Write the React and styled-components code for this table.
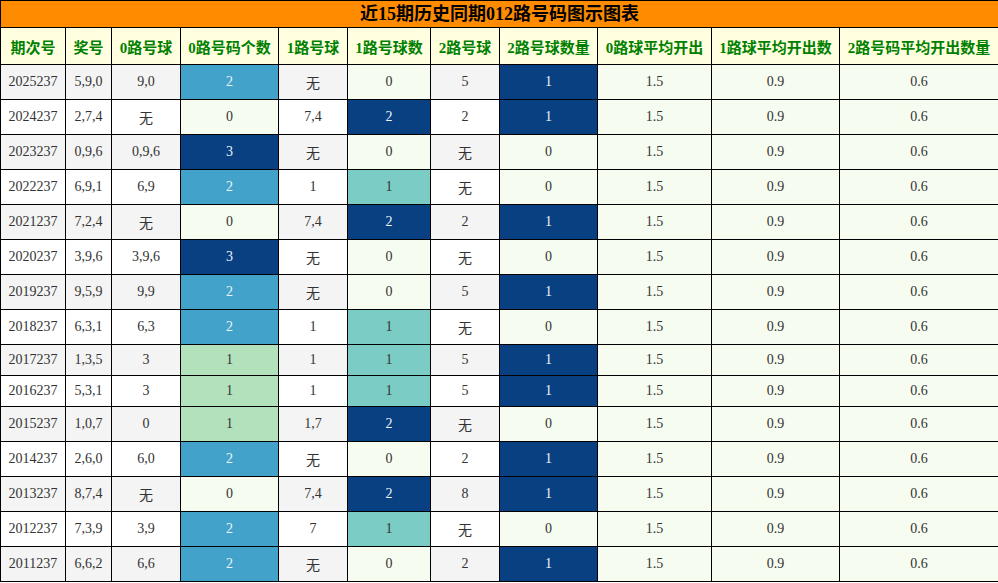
import React from "react";
import styled, { createGlobalStyle } from "styled-components";

const GlobalStyle = createGlobalStyle`
  html, body { margin: 0; padding: 0; background: #fff; }
  body { font-family: "Liberation Serif", "Noto Sans CJK SC", serif; }
`;

const Table = styled.table`
  width: 998px;
  table-layout: fixed;
  border-collapse: collapse;
  font-family: "Liberation Serif", "Noto Sans CJK SC", serif;
`;

const TitleCell = styled.th`
  height: 26px;
  padding: 0;
  background: #ff8c00;
  border: 1px solid #000;
  color: #000;
  font-size: 18px;
  font-weight: bold;
  text-align: center;
  vertical-align: middle;
  line-height: 24px;
`;

const HeadCell = styled.th`
  padding: 8px 0 7px;
  background: #ffffe0;
  border: 1px solid #000;
  color: #008000;
  font-size: 15px;
  font-weight: bold;
  text-align: center;
  white-space: nowrap;
`;

const Cell = styled.td`
  padding: 7px 0;
  border: 1px solid #000;
  font-size: 14px;
  text-align: center;
  vertical-align: middle;
  white-space: nowrap;
  color: ${(p) => (p.$light ? "#eef3f8" : "#333")};
  background: ${(p) => p.$bg || (p.$odd ? "#f4f4f4" : "#fff")};
`;

const PALE = "#f7fcf0";
const scales = {
  c0: { 0: PALE, 1: "#b3e1bb", 2: "#43a2ca", 3: "#084081" },
  c1: { 0: PALE, 1: "#7bccc4", 2: "#084081" },
  c2: { 0: PALE, 1: "#084081" },
};
const darkBgs = ["#43a2ca", "#084081"];

const widths = [65, 46, 69, 98, 69, 83, 69, 98, 114, 128, 159];
const headers = [
  "期次号",
  "奖号",
  "0路号球",
  "0路号码个数",
  "1路号球",
  "1路号球数",
  "2路号球",
  "2路号球数量",
  "0路球平均开出",
  "1路球平均开出数",
  "2路号码平均开出数量",
];

const rows = [
  ["2025237", "5,9,0", "9,0", 2, "无", 0, "5", 1],
  ["2024237", "2,7,4", "无", 0, "7,4", 2, "2", 1],
  ["2023237", "0,9,6", "0,9,6", 3, "无", 0, "无", 0],
  ["2022237", "6,9,1", "6,9", 2, "1", 1, "无", 0],
  ["2021237", "7,2,4", "无", 0, "7,4", 2, "2", 1],
  ["2020237", "3,9,6", "3,9,6", 3, "无", 0, "无", 0],
  ["2019237", "9,5,9", "9,9", 2, "无", 0, "5", 1],
  ["2018237", "6,3,1", "6,3", 2, "1", 1, "无", 0],
  ["2017237", "1,3,5", "3", 1, "1", 1, "5", 1],
  ["2016237", "5,3,1", "3", 1, "1", 1, "5", 1],
  ["2015237", "1,0,7", "0", 1, "1,7", 2, "无", 0],
  ["2014237", "2,6,0", "6,0", 2, "无", 0, "2", 1],
  ["2013237", "8,7,4", "无", 0, "7,4", 2, "8", 1],
  ["2012237", "7,3,9", "3,9", 2, "7", 1, "无", 0],
  ["2011237", "6,6,2", "6,6", 2, "无", 0, "2", 1],
];

function ScaleCell({ value, scale, odd }) {
  const bg = scale[value];
  return (
    <Cell $odd={odd} $bg={bg} $light={darkBgs.includes(bg)}>
      {value}
    </Cell>
  );
}

export default function App() {
  return (
    <>
      <GlobalStyle />
      <Table>
        <colgroup>
          {widths.map((w, i) => (
            <col key={i} style={{ width: w }} />
          ))}
        </colgroup>
        <thead>
          <tr>
            <TitleCell colSpan={11}>近15期历史同期012路号码图示图表</TitleCell>
          </tr>
          <tr>
            {headers.map((h) => (
              <HeadCell key={h}>{h}</HeadCell>
            ))}
          </tr>
        </thead>
        <tbody>
          {rows.map((r, i) => {
            const odd = i % 2 === 0;
            return (
              <tr key={r[0]}>
                <Cell $odd={odd}>{r[0]}</Cell>
                <Cell $odd={odd}>{r[1]}</Cell>
                <Cell $odd={odd}>{r[2]}</Cell>
                <ScaleCell value={r[3]} scale={scales.c0} odd={odd} />
                <Cell $odd={odd}>{r[4]}</Cell>
                <ScaleCell value={r[5]} scale={scales.c1} odd={odd} />
                <Cell $odd={odd}>{r[6]}</Cell>
                <ScaleCell value={r[7]} scale={scales.c2} odd={odd} />
                <Cell $bg={PALE}>1.5</Cell>
                <Cell $bg={PALE}>0.9</Cell>
                <Cell $bg={PALE}>0.6</Cell>
              </tr>
            );
          })}
        </tbody>
      </Table>
    </>
  );
}
